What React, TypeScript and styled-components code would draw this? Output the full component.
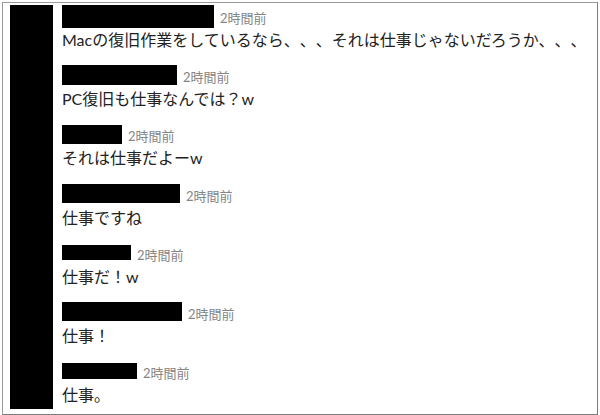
import styled, { createGlobalStyle } from "styled-components";

type Comment = {
  nameWidth: number;
  nameHeight: number;
  time: string;
  text: string;
};

const comments: Comment[] = [
  {
    nameWidth: 152,
    nameHeight: 23,
    time: "2時間前",
    text: "Macの復旧作業をしているなら、、、それは仕事じゃないだろうか、、、",
  },
  { nameWidth: 115, nameHeight: 20, time: "2時間前", text: "PC復旧も仕事なんでは？w" },
  { nameWidth: 60, nameHeight: 19, time: "2時間前", text: "それは仕事だよーw" },
  { nameWidth: 118, nameHeight: 19, time: "2時間前", text: "仕事ですね" },
  { nameWidth: 69, nameHeight: 15, time: "2時間前", text: "仕事だ！w" },
  { nameWidth: 120, nameHeight: 19, time: "2時間前", text: "仕事！" },
  { nameWidth: 75, nameHeight: 16, time: "2時間前", text: "仕事。" },
];

export default function App() {
  return (
    <>
      <GlobalStyle />
      <Frame>
        <Avatar />
        <Thread>
          {comments.map((c, i) => (
            <Entry key={i}>
              <Header>
                <Name $width={c.nameWidth} $height={c.nameHeight} />
                <Time>{c.time}</Time>
              </Header>
              <Message>{c.text}</Message>
            </Entry>
          ))}
        </Thread>
      </Frame>
    </>
  );
}

const GlobalStyle = createGlobalStyle`
  html, body {
    margin: 0;
    padding: 0;
    background: #fff;
  }
  body {
    font-family: "Lato", "Noto Sans CJK JP", sans-serif;
    text-spacing-trim: space-all;
  }
`;

const Frame = styled.div`
  box-sizing: border-box;
  width: 596px;
  height: 413px;
  margin: 2px 0 0 2px;
  border: 1px solid #9a9a9a;
  border-right-color: #7c7c7c;
  border-bottom-color: #7c7c7c;
  display: flex;
  padding: 2px 0 5px 7px;
  background: #fff;
`;

const Avatar = styled.div`
  width: 43px;
  flex-shrink: 0;
  background: #000;
`;

const Thread = styled.div`
  display: flex;
  flex-direction: column;
  margin-left: 9px;
`;

const Entry = styled.div`
  display: flex;
  flex-direction: column;
  padding-bottom: 11.2px;
`;

const Header = styled.div`
  display: flex;
  align-items: center;
  height: 22px;
  gap: 6px;
`;

const Name = styled.div<{ $width: number; $height: number }>`
  width: ${(p) => p.$width}px;
  height: ${(p) => p.$height}px;
  background: #000;
`;

const Time = styled.span`
  font-size: 13px;
  line-height: 16px;
  padding-top: 4px;
  color: #858585;
`;

const Message = styled.div`
  font-size: 16px;
  line-height: 26px;
  color: #222;
  white-space: nowrap;
  text-spacing-trim: space-all;
`;
